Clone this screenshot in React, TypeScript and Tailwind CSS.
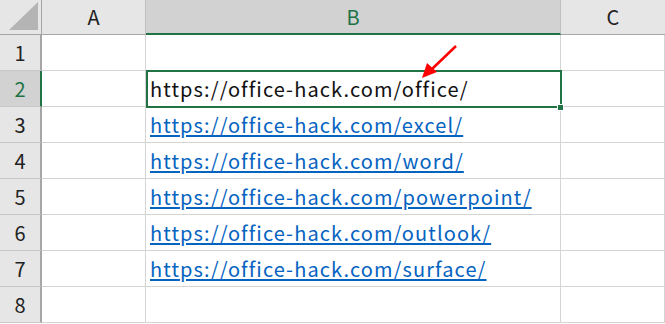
const font = { fontFamily: '"Noto Sans CJK JP", "Noto Sans", sans-serif' };

const links = [
  "https://office-hack.com/excel/",
  "https://office-hack.com/word/",
  "https://office-hack.com/powerpoint/",
  "https://office-hack.com/outlook/",
  "https://office-hack.com/surface/",
];

const RowHead = ({ n, active }: { n: number; active?: boolean }) => (
  <div
    className={
      "flex items-center justify-center h-[36px] border-b border-[#c8c8c8] text-[20px] leading-none text-[#222] " +
      (active
        ? "bg-[#d2d2d2] border-r-2 border-r-[#217346] text-[#217346]"
        : "bg-[#e6e6e6] border-r-2 border-r-[#a6a6a6]")
    }
  >
    {n}
  </div>
);

const Cell = ({ children }: { children?: React.ReactNode }) => (
  <div className="h-[36px] border-b border-r border-[#d4d4d4] bg-white flex items-center pl-[4px] text-[20px] leading-none tracking-[1.1px] whitespace-nowrap overflow-visible">
    {children}
  </div>
);

export default function App() {
  const rows: React.ReactNode[] = [null, "https://office-hack.com/office/", ...links, null];
  return (
    <div className="w-[665px] h-[324px] bg-white overflow-hidden relative" style={font}>
      <div className="grid grid-cols-[42px_104px_415px_104px]">
        {/* header row */}
        <div className="h-[35px] bg-[#e6e6e6] border-r border-b border-[#a6a6a6] flex items-end justify-end pr-[2px] pb-[3px]">
          <svg width="30" height="29" viewBox="0 0 30 29">
            <polygon points="0,28 29,28 29,0" fill="#b4b4b4" />
          </svg>
        </div>
        <div className="h-[35px] bg-[#e6e6e6] border-r border-b border-[#c0c0c0] border-b-[#a6a6a6] flex items-center justify-center text-[20px] leading-none text-[#222]">
          A
        </div>
        <div className="h-[35px] bg-[#d2d2d2] border-r border-[#c0c0c0] border-b-2 border-b-[#217346] flex items-center justify-center text-[20px] leading-none text-[#217346]">
          B
        </div>
        <div className="h-[35px] bg-[#e6e6e6] border-b border-[#a6a6a6] flex items-center justify-center text-[20px] leading-none text-[#222]">
          C
        </div>

        {rows.map((r, i) => (
          <div key={i} className="contents">
            <RowHead n={i + 1} active={i === 1} />
            <Cell />
            <Cell>
              {i === 1 ? (
                <span className="text-[#111]">{r}</span>
              ) : r ? (
                <span className="text-[#0563c1] underline underline-offset-[2px]">{r}</span>
              ) : null}
            </Cell>
            <Cell />
          </div>
        ))}
      </div>

      {/* selection */}
      <div className="absolute left-[146px] top-[70px] w-[416px] h-[38px] border-2 border-[#217346] pointer-events-none" />
      <div className="absolute left-[557px] top-[104px] w-[7px] h-[7px] bg-[#217346] border border-white" />

      {/* arrow */}
      <svg className="absolute left-0 top-0" width="665" height="324">
        <line x1="456" y1="46" x2="432" y2="69" stroke="#ff0000" strokeWidth="2.5" />
        <polygon points="422,78 427,63 437,72" fill="#ff0000" />
      </svg>
    </div>
  );
}
